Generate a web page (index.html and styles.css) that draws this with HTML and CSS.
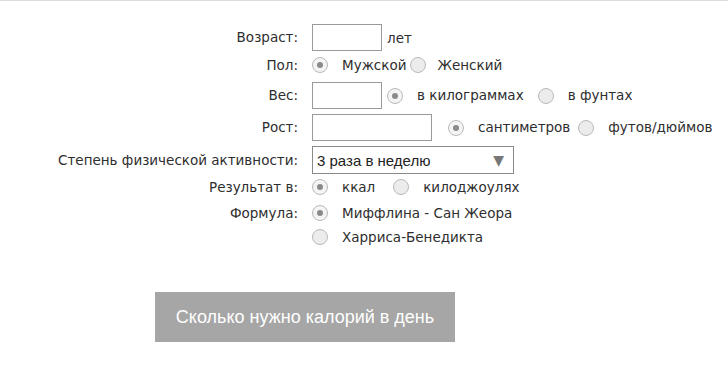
FILE: index.html
```html
<!DOCTYPE html>
<html lang="ru">
<head>
<meta charset="utf-8">
<link rel="stylesheet" href="styles.css">
</head>
<body>
<div class="topline"></div>
<form class="calc">
  <div class="lbl">Возраст:</div>
  <div class="ctl"><span class="box box-s"></span><span class="unit">лет</span></div>

  <div class="lbl">Пол:</div>
  <div class="ctl"><span class="radio on"></span><span class="opt opt-tight">Мужской</span><span class="radio"></span><span class="opt opt-near">Женский</span></div>

  <div class="lbl">Вес:</div>
  <div class="ctl"><span class="box box-s"></span><span class="radio on r-after-s"></span><span class="opt opt-w1">в килограммах</span><span class="radio"></span><span class="opt">в фунтах</span></div>

  <div class="lbl">Рост:</div>
  <div class="ctl"><span class="box box-m"></span><span class="radio on r-after-m"></span><span class="opt opt-w2">сантиметров</span><span class="radio"></span><span class="opt">футов/дюймов</span></div>

  <div class="lbl">Степень физической активности:</div>
  <div class="ctl"><span class="select"><span class="sel-text">3 раза в неделю</span><span class="arrow">▼</span></span></div>

  <div class="lbl">Результат в:</div>
  <div class="ctl"><span class="radio on"></span><span class="opt opt-w3">ккал</span><span class="radio"></span><span class="opt">килоджоулях</span></div>

  <div class="lbl">Формула:</div>
  <div class="ctl"><span class="radio on"></span><span class="opt">Миффлина - Сан Жеора</span></div>

  <div class="lbl"></div>
  <div class="ctl"><span class="radio"></span><span class="opt">Харриса-Бенедикта</span></div>
</form>
<div class="actions"><span class="btn">Сколько нужно калорий в день</span></div>
</body>
</html>
```
FILE: styles.css
```css
html, body {
  margin: 0;
  padding: 0;
  background: #fff;
}
body {
  font-family: "DejaVu Sans", Verdana, sans-serif;
  font-size: 13.5px;
  color: #2e2e2e;
  width: 728px;
  height: 372px;
  overflow: hidden;
}
.topline {
  height: 1px;
  background: #dcdcdc;
}
.calc {
  display: grid;
  grid-template-columns: 298px 1fr;
  grid-template-rows: 27px 28px 33px 31px 34px 20px 32px 16px;
  column-gap: 14px;
  margin-top: 23px;
}
.lbl {
  display: flex;
  align-items: center;
  justify-content: flex-end;
  white-space: nowrap;
  padding-bottom: 1px;
}
.ctl {
  display: flex;
  align-items: center;
  white-space: nowrap;
}
.box {
  display: block;
  box-sizing: border-box;
  height: 27px;
  border: 1px solid #9a9a9a;
  background: #fff;
}
.box-s { width: 70px; }
.box-m { width: 120px; }
.unit { margin-left: 5px; }
.radio {
  display: block;
  box-sizing: border-box;
  width: 16px;
  height: 16px;
  border-radius: 50%;
  border: 1px solid #b9b9b9;
  background: #ececec;
  position: relative;
  flex: none;
}
.radio.on {
  background: #f4f4f4;
}
.radio.on::after {
  content: "";
  position: absolute;
  left: 4px;
  top: 4px;
  width: 6px;
  height: 6px;
  border-radius: 50%;
  background: #8a8a8a;
}
.opt {
  margin-left: 14px;
  margin-right: 12px;
  padding-bottom: 1px;
}
.opt-tight { margin-right: 4px; }
.opt-near { margin-left: 11px; }
.opt-w1 { margin-right: 14px; }
.opt-w2 { margin-right: 8px; }
.opt-w3 { margin-right: 18px; }
.r-after-s { margin-left: 5px; }
.r-after-m { margin-left: 16px; }
.select {
  display: flex;
  align-items: center;
  justify-content: space-between;
  box-sizing: border-box;
  width: 202px;
  height: 28px;
  border: 1px solid #8a8a8a;
  background: #fff;
  padding: 0 9px 0 4px;
  font-family: "Liberation Sans", Arial, sans-serif;
  font-size: 15px;
  color: #222;
}
.arrow {
  color: #777;
  font-size: 14px;
  font-family: "DejaVu Sans", sans-serif;
}
.actions {
  margin-top: 47px;
  padding-left: 155px;
}
.btn {
  display: flex;
  align-items: center;
  justify-content: center;
  width: 300px;
  height: 50px;
  background: #a6a6a6;
  color: #fff;
  font-family: "Liberation Sans", Arial, sans-serif;
  font-size: 18px;
}
```
